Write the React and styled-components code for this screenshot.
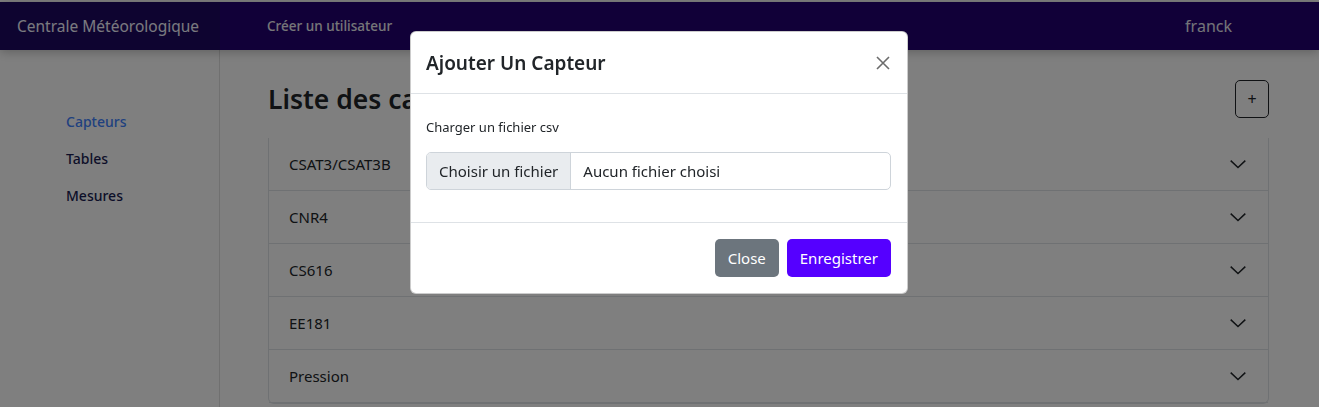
import React from "react";
import styled, { createGlobalStyle } from "styled-components";

const GlobalStyle = createGlobalStyle`
  html, body {
    margin: 0;
    padding: 0;
    height: 100%;
    overflow: hidden;
  }
  body {
    font-family: "Noto Sans", "Open Sans", sans-serif;
    background: #ffffff;
    color: #212529;
  }
  * { box-sizing: border-box; }
`;

const capteurs = ["CSAT3/CSAT3B", "CNR4", "CS616", "EE181", "Pression"];

function Chevron() {
  return (
    <svg width="18" height="18" viewBox="0 0 16 16" fill="none">
      <path d="M1.5 5 L8 11.2 L14.5 5" stroke="#212529" strokeWidth="1.3" />
    </svg>
  );
}

function CloseIcon() {
  return (
    <svg width="16" height="16" viewBox="0 0 16 16" fill="none">
      <path d="M2 2 L14 14 M14 2 L2 14" stroke="#6c6c6c" strokeWidth="1.6" />
    </svg>
  );
}

export default function App() {
  return (
    <>
      <GlobalStyle />
      <Page>
        <Navbar>
          <Brand>Centrale Météorologique</Brand>
          <NavLink>Créer un utilisateur</NavLink>
          <User>franck</User>
        </Navbar>
        <Body>
          <Sidebar>
            <SideLink $active>Capteurs</SideLink>
            <SideLink>Tables</SideLink>
            <SideLink>Mesures</SideLink>
          </Sidebar>
          <Main>
            <TitleRow>
              <Title>Liste des capteurs</Title>
              <AddButton>+</AddButton>
            </TitleRow>
            <Accordion>
              {capteurs.map((c) => (
                <Item key={c}>
                  <span>{c}</span>
                  <Chevron />
                </Item>
              ))}
            </Accordion>
          </Main>
        </Body>
      </Page>
      <Backdrop />
      <ModalWrap>
        <Modal>
          <ModalHeader>
            <ModalTitle>Ajouter Un Capteur</ModalTitle>
            <CloseBtn>
              <CloseIcon />
            </CloseBtn>
          </ModalHeader>
          <ModalBody>
            <Label>Charger un fichier csv</Label>
            <FileInput>
              <FileButton>Choisir un fichier</FileButton>
              <FileName>Aucun fichier choisi</FileName>
            </FileInput>
          </ModalBody>
          <ModalFooter>
            <Button $variant="secondary">Close</Button>
            <Button $variant="primary">Enregistrer</Button>
          </ModalFooter>
        </Modal>
      </ModalWrap>
    </>
  );
}

const Page = styled.div`
  display: flex;
  flex-direction: column;
  min-height: 100vh;
  border-top: 2px solid #ffffff;
`;

const Navbar = styled.nav`
  display: flex;
  align-items: center;
  flex-shrink: 0;
  height: 48px;
  background: #220070;
  box-shadow: 0 2px 10px rgba(0, 0, 0, 0.25);
  position: relative;
  z-index: 1;
`;

const Brand = styled.div`
  width: 220px;
  height: 100%;
  display: flex;
  align-items: center;
  padding-left: 17px;
  background: #1c0860;
  color: #f4f4ff;
  font-size: 15.5px;
`;

const NavLink = styled.a`
  margin-left: 47px;
  color: #ededf2;
  font-size: 13.5px;
  font-weight: 500;
`;

const User = styled.div`
  margin-left: auto;
  margin-right: 87px;
  color: #e8e8f0;
  font-size: 16px;
`;

const Body = styled.div`
  display: flex;
  flex: 1;
`;

const Sidebar = styled.aside`
  width: 220px;
  flex-shrink: 0;
  border-right: 1px solid #e0e0e0;
  display: flex;
  flex-direction: column;
  gap: 18px;
  padding: 62px 0 0 66px;
`;

const SideLink = styled.a`
  font-size: 14px;
  font-weight: 500;
  color: ${(p) => (p.$active ? "#3f82ff" : "#1a1d52")};
`;

const Main = styled.main`
  flex: 1;
  padding: 30px 50px 0 48px;
`;

const TitleRow = styled.div`
  display: flex;
  justify-content: space-between;
  align-items: flex-start;
  height: 58px;
`;

const Title = styled.h1`
  margin: 0;
  margin-top: 1px;
  font-size: 26.5px;
  font-weight: 600;
  color: #212529;
`;

const AddButton = styled.button`
  width: 34px;
  height: 38px;
  border: 1px solid #212529;
  background: transparent;
  border-radius: 5px;
  font-size: 16px;
  color: #212529;
  font-family: inherit;
`;

const Accordion = styled.div`
  border: 1px solid #dee2e6;
  border-top: none;
  border-radius: 0 0 6px 6px;
`;

const Item = styled.div`
  display: flex;
  justify-content: space-between;
  align-items: center;
  height: 53px;
  padding: 0 21px 0 20px;
  border-bottom: 1px solid #dee2e6;
  font-size: 15px;
  color: #212529;
`;

const Backdrop = styled.div`
  position: fixed;
  inset: 0;
  background: rgba(0, 0, 0, 0.5);
  z-index: 10;
`;

const ModalWrap = styled.div`
  position: fixed;
  inset: 0;
  z-index: 20;
  display: flex;
  justify-content: center;
  align-items: flex-start;
  padding-top: 31px;
  padding-right: 1px;
`;

const Modal = styled.div`
  width: 498px;
  background: #fff;
  border-radius: 6px;
  border: 1px solid rgba(0, 0, 0, 0.2);
`;

const ModalHeader = styled.div`
  display: flex;
  align-items: center;
  justify-content: space-between;
  height: 62px;
  padding: 0 16px 0 15px;
  border-bottom: 1px solid #dee2e6;
`;

const ModalTitle = styled.h5`
  margin: 0;
  font-size: 19px;
  font-weight: 600;
  color: #212529;
`;

const CloseBtn = styled.button`
  border: none;
  background: transparent;
  padding: 0;
  display: flex;
`;

const ModalBody = styled.div`
  padding: 24px 16px 32px 15px;
  border-bottom: 1px solid #dee2e6;
`;

const Label = styled.div`
  font-size: 13px;
  color: #212529;
  margin-bottom: 16px;
`;

const FileInput = styled.div`
  display: flex;
  height: 38px;
  border: 1px solid #ced4da;
  border-radius: 5px;
  overflow: hidden;
  font-size: 15px;
  color: #212529;
`;

const FileButton = styled.div`
  display: flex;
  align-items: center;
  padding: 0 12px;
  background: #e9ecef;
  border-right: 1px solid #ced4da;
`;

const FileName = styled.div`
  display: flex;
  align-items: center;
  padding: 0 12px;
`;

const ModalFooter = styled.div`
  display: flex;
  justify-content: flex-end;
  gap: 8px;
  padding: 16px;
`;

const Button = styled.button`
  height: 38px;
  padding: 0 13px;
  border: none;
  border-radius: 5px;
  font-family: inherit;
  font-size: 15px;
  color: #fff;
  background: ${(p) => (p.$variant === "primary" ? "#5500ff" : "#6c757d")};
`;
